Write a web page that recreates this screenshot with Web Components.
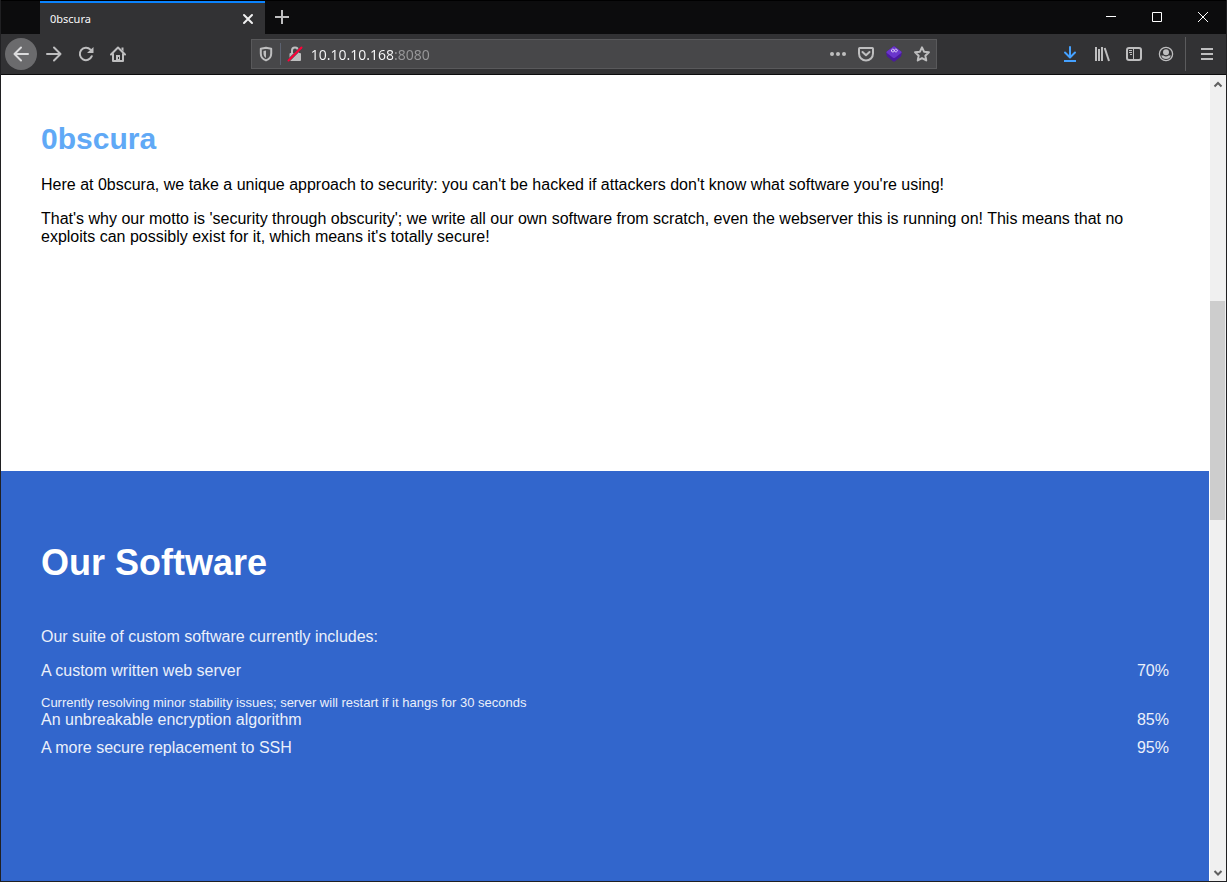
<!DOCTYPE html>
<html lang="en">
<head>
<meta charset="utf-8">
<meta name="viewport" content="width=device-width, initial-scale=1">
<title>0bscura</title>
<style>
  html, body { margin: 0; height: 100%; }
  body { font-family: "Liberation Sans", Arial, sans-serif; background: #0c0c0d; }
</style>
</head>
<body>
<browser-window>
  <tab-strip slot="tabs"><browser-tab>0bscura</browser-tab></tab-strip>
  <nav-toolbar slot="toolbar"></nav-toolbar>
  <page-section>
    <span slot="title">0bscura</span>
    <text-block>Here at 0bscura, we take a unique approach to security: you can't be hacked if attackers don't know what software you're using!</text-block>
    <text-block>That's why our motto is 'security through obscurity'; we write all our own software from scratch, even the webserver this is running on! This means that no exploits can possibly exist for it, which means it's totally secure!</text-block>
  </page-section>
  <page-section variant="blue">
    <span slot="title">Our Software</span>
    <text-block>Our suite of custom software currently includes:</text-block>
    <software-list>
      <software-item value="70%" note="Currently resolving minor stability issues; server will restart if it hangs for 30 seconds">A custom written web server</software-item>
      <software-item value="85%">An unbreakable encryption algorithm</software-item>
      <software-item value="95%">A more secure replacement to SSH</software-item>
    </software-list>
  </page-section>
  <scroll-bar slot="scrollbar"></scroll-bar>
</browser-window>

<script>
const define = (name, html, setup) => {
  const template = document.createElement("template");
  template.innerHTML = html;
  customElements.define(name, class extends HTMLElement {
    constructor() {
      super();
      this.attachShadow({ mode: "open" }).append(template.content.cloneNode(true));
    }
    connectedCallback() { if (setup) setup(this, this.shadowRoot); }
  });
};

const ICONS = {
  back: '<path d="M15 8H1.500M8 1.500 1.500 8 8 14.500" fill="none" stroke="currentColor" stroke-width="2" stroke-linecap="round" stroke-linejoin="round"/>',
  forward: '<path d="M1 8h13.500M8 1.500 14.500 8 8 14.500" fill="none" stroke="currentColor" stroke-width="2" stroke-linecap="round" stroke-linejoin="round"/>',
  reload: '<path d="M12.500 3.600A6.200 6.200 0 1 0 13.800 10.200" fill="none" stroke="currentColor" stroke-width="2" stroke-linecap="round"/><path d="M15.500 1v5.500a.5.5 0 0 1-.5.5H9z" fill="currentColor"/>',
  home: '<path d="M1 8.500 8 1.500l7 7M3 7.500V15h10V7.500" fill="none" stroke="currentColor" stroke-width="2" stroke-linecap="round" stroke-linejoin="round"/><path d="M11.500 1.500h2v4l-2-2zM6 9h4v6H6z" fill="currentColor"/><path d="M8 11h1v2H8z" fill="#323234"/>',
  shield: '<path d="M8 1.800 13.200 2.800v4.700c0 3.500-2 5.800-5.200 6.900-3.200-1.100-5.200-3.400-5.200-6.900V2.800z" fill="none" stroke="currentColor" stroke-width="2" stroke-linejoin="round"/><path d="M8 4.500V12c-1.800-1-2.500-2.600-2.500-4.700V5z" fill="currentColor"/>',
  lock: '<path d="M5 7V4.500a3 3 0 0 1 6 0V7" fill="none" stroke="currentColor" stroke-width="2"/><rect x="2.500" y="7" width="11.500" height="8" rx="1" fill="currentColor"/><path d="M1.500 14.500 14.500 1.500" stroke="#474749" stroke-width="3"/><path d="M1.500 14.500 14.500 1.500" stroke="#ff0039" stroke-width="2" stroke-linecap="round"/>',
  dots: '<g fill="currentColor"><circle cx="2" cy="8" r="2"/><circle cx="8" cy="8" r="2"/><circle cx="14" cy="8" r="2"/></g>',
  pocket: '<path d="M1.800 2h12.400a.9.900 0 0 1 .8.900V7.500a7 7 0 0 1-14 0V2.900a.9.900 0 0 1 .8-.9z" fill="none" stroke="currentColor" stroke-width="2"/><path d="M4.500 6 8 9.300 11.500 6" fill="none" stroke="currentColor" stroke-width="2" stroke-linecap="round" stroke-linejoin="round"/>',
  gem: '<path d="M7 .7Q8 0 9 .7l6.200 4.800q.8.700.5 1.700l-.4 2.400q-.2.900-1 1.500L9 15.300q-1 .7-2 0l-5.300-4.200q-.8-.6-1-1.500L.3 7.200Q0 6.200.8 5.500z" fill="#4a1a9e"/><path d="M7 .7Q8 0 9 .7l6.200 4.800q.8.800 0 1.500L9 11.700q-1 .7-2 0L.8 7Q0 6.300.8 5.500z" fill="#6a35cc"/><g transform="rotate(-20 8.500 4.500)" fill="none" stroke="#ded0f6" stroke-width=".9"><circle cx="6.900" cy="4" r="1.400"/><circle cx="9.800" cy="5" r="1.400"/></g>',
  star: '<path d="m8 1.300 2.050 4.400 4.850.6-3.550 3.350.9 4.800L8 12.100l-4.250 2.350.9-4.800L1.100 6.300l4.850-.6z" fill="none" stroke="currentColor" stroke-width="2" stroke-linejoin="round"/>',
  download: '<path d="M8 1v10M3 6.500 8 11.500l5-5" fill="none" stroke="currentColor" stroke-width="2" stroke-linecap="round" stroke-linejoin="round"/><path d="M2 14h12v2H2z" fill="currentColor"/>',
  library: '<path d="M1 1h2v14H1zM4 3h2v12H4zM7 1h2v14H7z" fill="currentColor"/><path d="m10.700 2 4.300 13" stroke="currentColor" stroke-width="2"/>',
  sidebar: '<rect x="1" y="2" width="14" height="12" rx="2" fill="none" stroke="currentColor" stroke-width="2"/><path d="M7 2h1v12H7zM3 4h3v1H3zM3 6h3v1H3zM4 8h2v1H4z" fill="currentColor"/>',
  account: '<circle cx="8" cy="8" r="6.600" fill="none" stroke="currentColor" stroke-width="1.300"/><circle cx="8" cy="6.200" r="3" fill="currentColor"/><path d="M3.200 9.500h2.300Q8 11.500 10.500 9.500h2.300a5 5 0 0 1-9.600 0z" fill="currentColor"/>',
  menu: '<path d="M2 2h12v2H2zM2 7h12v2H2zM2 12h12v2H2z" fill="currentColor"/>',
  close: '<path d="m3 4 8 8m0-8-8 8" stroke="currentColor" stroke-width="2" stroke-linecap="round"/>',
  plus: '<path d="M8 1h2v6h6v2h-6v6H8V9H2V7h6z" fill="currentColor"/>',
  minimize: '<path d="M3 7h10v1H3z" fill="currentColor"/>',
  maximize: '<path d="M3.500 3.500h9v9h-9z" fill="none" stroke="currentColor"/>',
  quit: '<path d="m3 3 10 10M13 3 3 13" stroke="currentColor" stroke-width="1"/>',
  up: '<path d="M4.500 10.500 8 7l3.500 3.500" fill="none" stroke="currentColor" stroke-width="2"/>',
  down: '<path d="M4.500 6 8 9.500 11.500 6" fill="none" stroke="currentColor" stroke-width="2"/>'
};

define("icon-button", `
  <style>
    :host { display: flex; width: 32px; height: 32px; flex: none; color: #bebebf; }
    button { display: grid; place-items: center; width: 100%; height: 100%; padding: 0; border: 0; border-radius: var(--radius, 2px); background: var(--fill, none); color: inherit; }
    svg { display: block; width: 16px; height: 16px; }
  </style>
  <button type="button"><svg viewBox="0 0 16 16" aria-hidden="true"></svg></button>`,
  (host, root) => {
    root.querySelector("svg").innerHTML = ICONS[host.getAttribute("icon")];
    root.querySelector("button").setAttribute("aria-label", host.getAttribute("label"));
  });

define("browser-tab", `
  <style>
    :host { display: flex; align-items: center; box-sizing: border-box; width: 225px; height: 33px; padding-left: 10px; background: #323234; border-top: 2px solid #0a84ff; color: #f9f9fa; font: 11px/16px "Noto Sans", sans-serif; }
    span { flex: 1; }
    icon-button { height: 30px; color: #f0f0f1; }
  </style>
  <span><slot></slot></span><icon-button icon="close" label="Close tab"></icon-button>`);

define("tab-strip", `
  <style>
    :host { display: flex; align-items: flex-start; height: 34px; box-sizing: border-box; padding-left: 39px; border-top: 1px solid #000; background: #0c0c0d; }
    .caption { display: flex; gap: 14px; margin-left: auto; padding-right: 7px; }
    .caption icon-button { color: #fff; }
  </style>
  <slot></slot>
  <icon-button icon="plus" label="Open a new tab"></icon-button>
  <div class="caption">
    <icon-button icon="minimize" label="Minimize"></icon-button>
    <icon-button icon="maximize" label="Maximize"></icon-button>
    <icon-button icon="quit" label="Close window"></icon-button>
  </div>`);

define("address-bar", `
  <style>
    :host { display: flex; align-items: center; box-sizing: border-box; height: 30px; border: 1px solid #59595b; background: #474749; color: #b1b1b3; }
    icon-button { width: 28px; height: 28px; }
    .rule { width: 1px; height: 22px; background: #5c6270; }
    input { flex: 1; min-width: 0; box-sizing: border-box; height: 28px; margin: 0; padding: 0 0 0 2px; border: 0; outline: 0;
      font: 14px/20px "Noto Sans", sans-serif; color: #f9f9fa; -webkit-text-fill-color: transparent;
      background: linear-gradient(90deg, #f9f9fa 84px, #98989a 84px); -webkit-background-clip: text; background-clip: text; }
  </style>
  <icon-button icon="shield" label="Tracking protection"></icon-button>
  <span class="rule"></span>
  <icon-button icon="lock" label="Connection is not secure"></icon-button>
  <input type="text" aria-label="Address" value="10.10.10.168:8080">
  <icon-button icon="dots" label="Page actions"></icon-button>
  <icon-button icon="pocket" label="Save to Pocket"></icon-button>
  <icon-button icon="gem" label="Extension"></icon-button>
  <icon-button icon="star" label="Bookmark this page"></icon-button>`);

define("nav-toolbar", `
  <style>
    :host { display: flex; align-items: center; box-sizing: border-box; height: 41px; padding: 0 3px 0 4px; background: #323234; border-bottom: 1px solid #0c0c0d; }
    .back { --radius: 50%; --fill: #6b6b6d; color: #dcdcdd; margin-right: 1px; }
    .space { flex: 117; }
    address-bar { flex: 686; }
    .download { color: #45a1ff; }
    .rule { width: 1px; height: 34px; margin: 0 5px 0 3px; background: #5b5b5d; }
  </style>
  <icon-button class="back" icon="back" label="Back"></icon-button>
  <icon-button icon="forward" label="Forward"></icon-button>
  <icon-button icon="reload" label="Reload"></icon-button>
  <icon-button icon="home" label="Home"></icon-button>
  <span class="space"></span>
  <address-bar></address-bar>
  <span class="space"></span>
  <icon-button class="download" icon="download" label="Downloads"></icon-button>
  <icon-button icon="library" label="Library"></icon-button>
  <icon-button icon="sidebar" label="Sidebars"></icon-button>
  <icon-button icon="account" label="Account"></icon-button>
  <span class="rule"></span>
  <icon-button icon="menu" label="Open menu"></icon-button>`);

define("scroll-bar", `
  <style>
    :host { display: flex; flex-direction: column; width: 16px; flex: none; background: #f0f0f0; }
    icon-button { width: 16px; height: 17px; color: #606060; }
    .before { flex: 209; }
    .thumb { flex: 219; margin-right: 1px; background: #cdcdcd; }
    .after { flex: 344; }
  </style>
  <icon-button icon="up" label="Scroll up"></icon-button>
  <span class="before"></span><span class="thumb"></span><span class="after"></span>
  <icon-button icon="down" label="Scroll down"></icon-button>`);

define("text-block", `
  <style>
    :host { display: block; margin-bottom: 16px; font-size: 16px; line-height: 18px; }
    p { margin: 0; }
  </style>
  <p><slot></slot></p>`);

define("software-item", `
  <style>
    :host { display: block; margin-bottom: 10px; font-size: 16px; line-height: 18px; }
    :host([note]) { margin-bottom: 0; }
    .row { display: flex; justify-content: space-between; }
    small { display: block; margin-top: 14px; font-size: 13px; line-height: 17px; }
  </style>
  <div class="row"><span><slot></slot></span><span class="value"></span></div>`,
  (host, root) => {
    root.querySelector(".value").textContent = host.getAttribute("value");
    if (host.hasAttribute("note") && !root.querySelector("small")) {
      const note = document.createElement("small");
      note.textContent = host.getAttribute("note");
      root.append(note);
    }
  });

define("software-list", `<style>:host { display: block; }</style><slot></slot>`);

define("page-section", `
  <style>
    :host { display: block; box-sizing: border-box; min-height: 396px; padding: 46px 40px 40px; background: #fff; color: #000; }
    h2 { margin: 0 0 19px; font-size: 30px; line-height: 36px; color: #60a9f6; }
    :host([variant="blue"]) { flex: 1; padding-top: 71px; margin-right: 1px; background: #3266cc; color: #ebf0fa; }
    :host([variant="blue"]) h2 { margin-bottom: 44px; font-size: 36px; line-height: 42px; color: #fff; }
  </style>
  <h2><slot name="title"></slot></h2>
  <slot></slot>`);

define("browser-window", `
  <style>
    :host { display: flex; flex-direction: column; box-sizing: border-box; min-height: 100vh; border: solid #202022; border-width: 0 1px 1px; }
    .view { display: flex; flex: 1; }
    main { display: flex; flex-direction: column; flex: 1; min-width: 0; background: #fff; }
  </style>
  <slot name="tabs"></slot>
  <slot name="toolbar"></slot>
  <div class="view"><main><slot></slot></main><slot name="scrollbar"></slot></div>`);
</script>
</body>
</html>
